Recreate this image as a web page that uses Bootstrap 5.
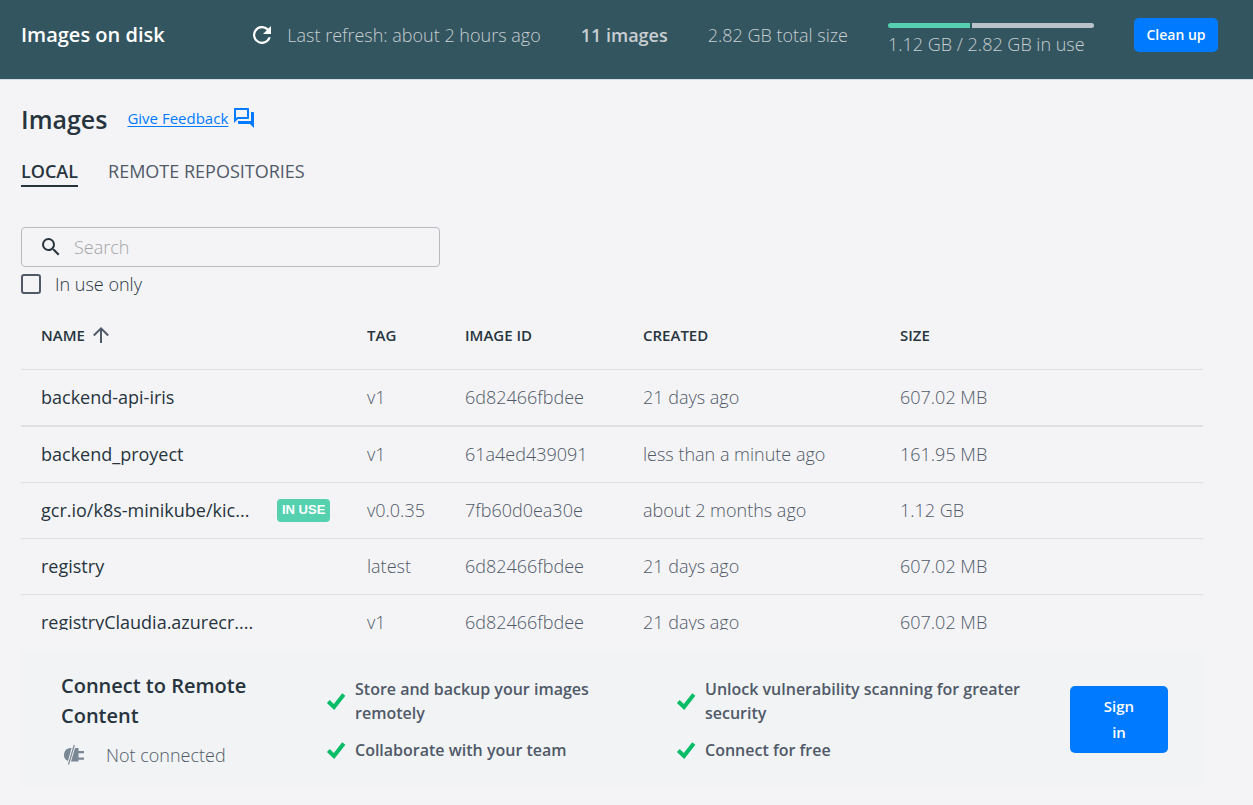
<!DOCTYPE html>
<html lang="en">
<head>
<meta charset="utf-8">
<meta name="viewport" content="width=device-width, initial-scale=1">
<title>Images on disk</title>
<link href="https://cdn.jsdelivr.net/npm/bootstrap@5.3.0/dist/css/bootstrap.min.css" rel="stylesheet">
<style>
  :root {
    --ink: #27343e;
    --soft-ink: #505968;
    --blue: #007bff;
    --mint: #55d1b0;
    --line: #dfe0e3;
  }
  body {
    font-family: "Open Sans", sans-serif;
    font-size: 18px;
    line-height: 24px;
    font-weight: 300;
    color: var(--soft-ink);
    background: #f4f4f6;
  }
  svg { display: block; flex: none; }
  .topbar {
    min-height: 80px;
    padding: 0 35px 9px 21px;
    background: #33555f;
    border-bottom: 1px solid #d5dce2;
    color: #c8ced2;
    gap: 40px;
  }
  .topbar h1 { font-size: 20px; line-height: 24px; font-weight: 600; color: #fff; }
  .refresh { gap: 13px; }
  .icon-btn { color: #fff; width: 24px; height: 24px; }
  .usage { width: 206px; padding-top: 9px; }
  .usage .progress { height: 5px; gap: 2px; background: transparent; border-radius: 3px; }
  .usage .used { background: var(--mint); }
  .usage .free { background: #bac3c9; }
  .btn-blue {
    --bs-btn-color: #fff;
    --bs-btn-bg: var(--blue);
    --bs-btn-hover-color: #fff;
    --bs-btn-hover-bg: #006ae0;
    --bs-btn-border-width: 0;
    --bs-btn-border-radius: 5px;
    --bs-btn-font-weight: 600;
    --bs-btn-font-size: 14px;
  }
  .btn-clean { width: 84px; height: 34px; padding: 0 0 2px; }
  .btn-sign { --bs-btn-font-size: 15px; --bs-btn-line-height: 26px; width: 98px; padding: 7px 24px 8px; }
  .page { padding: 23px 47px 0 21px; }
  .page h2 { font-size: 25px; line-height: 32px; font-weight: 600; color: var(--ink); }
  .feedback { gap: 4px; margin-left: 20px; padding-bottom: 2px; }
  .feedback a { font-size: 15px; font-weight: 400; color: var(--blue); text-underline-offset: 2px; }
  .view-tabs { gap: 30px; margin-top: 24px; }
  .view-tabs .nav-link {
    padding: 0 0 2px;
    font-size: 18px;
    font-weight: 400;
    color: var(--soft-ink);
    border-bottom: 2px solid transparent;
  }
  .view-tabs .nav-link.active { font-weight: 600; color: var(--ink); border-color: var(--ink); }
  .search {
    width: 419px;
    max-width: 100%;
    height: 40px;
    margin-top: 40px;
    padding-left: 17px;
    gap: 11px;
    border: 1px solid #b8babf;
    border-radius: 4px;
    color: var(--ink);
  }
  .search .form-control { font-size: 18px; font-weight: 300; background: transparent; }
  .search .form-control::placeholder { color: #a2a4a9; }
  .in-use-only { gap: 14px; margin-top: 5px; color: var(--ink); }
  .in-use-only .form-check-input {
    width: 20px;
    height: 20px;
    border: 2px solid var(--soft-ink);
    border-radius: 3px;
    background-color: transparent;
  }
  .list-pane { height: 334px; margin-right: 3px; overflow: hidden; }
  .images-table { table-layout: fixed; margin: 0; --bs-table-bg: transparent; --bs-table-color: var(--soft-ink); }
  .images-table > :not(caption) > * > * { padding: 15px 0 16px 20px; border-bottom: 1px solid var(--line); }
  .images-table > thead > tr > th {
    padding: 27px 0 22px 20px;
    font-size: 15px;
    font-weight: 600;
    color: var(--ink);
  }
  .images-table > tbody > tr:first-child > td { border-bottom-width: 2px; }
  .col-tag { width: 98px; }
  .col-id { width: 178px; }
  .col-created { width: 257px; }
  .col-size { width: 323px; }
  .img-name { width: 216px; font-weight: 400; color: var(--ink); }
  .in-use {
    margin-left: 20px;
    padding: 0 5px 2px;
    border-radius: 4px;
    background: var(--mint);
    color: #fff;
    font: 700 13px/21px "Liberation Sans", Arial, sans-serif;
    white-space: nowrap;
  }
  .remote { margin-top: 20px; padding: 21px 38px 19px 40px; background: #f1f3f5; }
  .remote-state { width: 265px; }
  .remote h3 { font-size: 20px; line-height: 30px; font-weight: 600; color: var(--ink); }
  .remote-state .status { gap: 19px; margin-top: 12px; }
  .perks { display: grid; grid-template-columns: 350fr 394fr; row-gap: 13px; font-size: 16px; font-weight: 600; }
  .perks .perk { gap: 9px; padding-right: 40px; }
</style>
</head>
<body>
<header class="topbar d-flex align-items-center">
  <h1 class="m-0 me-auto">Images on disk</h1>
  <div class="refresh d-flex align-items-center">
    <button type="button" class="icon-btn btn p-0 border-0" aria-label="Refresh">
      <svg width="24" height="24" viewBox="0 0 24 24" fill="currentColor"><path d="M18.4 5.600A9 9 0 1 0 20.700 14.300H18.400A6.800 6.800 0 1 1 16.800 7.200L13 11H21V3z"/></svg>
    </button>
    <span>Last refresh: about 2 hours ago</span>
  </div>
  <span class="fw-semibold">11 images</span>
  <span>2.82 GB total size</span>
  <div class="usage">
    <div class="progress">
      <div class="progress-bar used" style="width:40%"></div>
      <div class="progress-bar free flex-fill"></div>
    </div>
    <div class="text-nowrap mt-1">1.12 GB / 2.82 GB in use</div>
  </div>
  <button type="button" class="btn btn-blue btn-clean">Clean up</button>
</header>

<main class="page">
  <div class="d-flex align-items-center">
    <h2 class="m-0">Images</h2>
    <div class="feedback d-flex align-items-center">
      <a href="#">Give Feedback</a>
      <svg width="24" height="24" viewBox="0 0 24 24" fill="#007bff"><path d="M15 4v7H5.170L4 12.170V4h11m1-2H3c-.55 0-1 .45-1 1v14l4-4h10c.55 0 1-.45 1-1V3c0-.55-.45-1-1-1zm5 4h-2v9H6v2c0 .55.45 1 1 1h11l4 4V7c0-.55-.45-1-1-1z"/></svg>
    </div>
  </div>

  <nav class="nav view-tabs">
    <a class="nav-link active" href="#" aria-current="page">LOCAL</a>
    <a class="nav-link" href="#">REMOTE REPOSITORIES</a>
  </nav>

  <div class="search d-flex align-items-center">
    <svg width="24" height="24" viewBox="0 0 24 24" fill="currentColor"><path d="M15.500 14h-.79l-.28-.27A6.470 6.470 0 0 0 16 9.500 6.500 6.500 0 1 0 9.500 16c1.610 0 3.090-.59 4.230-1.570l.27.28v.79l5 4.990L20.490 19l-4.990-5zm-6 0C7.010 14 5 11.990 5 9.500S7.010 5 9.500 5 14 7.010 14 9.500 11.990 14 9.500 14z"/></svg>
    <input type="search" class="form-control border-0 p-0 shadow-none" placeholder="Search" aria-label="Search">
  </div>
  <div class="in-use-only d-flex align-items-center">
    <input class="form-check-input m-0" type="checkbox" id="inUseOnly">
    <label for="inUseOnly">In use only</label>
  </div>

  <div class="list-pane">
    <table class="table images-table">
      <colgroup><col><col class="col-tag"><col class="col-id"><col class="col-created"><col class="col-size"></colgroup>
      <thead>
        <tr>
          <th scope="col"><span class="d-flex align-items-center gap-1">NAME
            <svg width="24" height="24" viewBox="0 0 24 24" fill="none" stroke="#505968" stroke-width="2"><path d="M12 20V5.500M4.800 12.500 12 5.300l7.200 7.200"/></svg></span></th>
          <th scope="col">TAG</th>
          <th scope="col">IMAGE ID</th>
          <th scope="col">CREATED</th>
          <th scope="col">SIZE</th>
        </tr>
      </thead>
      <tbody>
        <tr><td><div class="img-name text-truncate">backend-api-iris</div></td><td>v1</td><td>6d82466fbdee</td><td>21 days ago</td><td>607.02 MB</td></tr>
        <tr><td><div class="img-name text-truncate">backend_proyect</div></td><td>v1</td><td>61a4ed439091</td><td>less than a minute ago</td><td>161.95 MB</td></tr>
        <tr><td><div class="d-flex align-items-end"><div class="img-name text-truncate">gcr.io/k8s-minikube/kic...</div><span class="in-use">IN USE</span></div></td><td>v0.0.35</td><td>7fb60d0ea30e</td><td>about 2 months ago</td><td>1.12 GB</td></tr>
        <tr><td><div class="img-name text-truncate">registry</div></td><td>latest</td><td>6d82466fbdee</td><td>21 days ago</td><td>607.02 MB</td></tr>
        <tr><td><div class="img-name text-truncate">registryClaudia.azurecr....</div></td><td>v1</td><td>6d82466fbdee</td><td>21 days ago</td><td>607.02 MB</td></tr>
      </tbody>
    </table>
  </div>

  <section class="remote d-flex align-items-center">
    <div class="remote-state flex-shrink-0">
      <h3 class="m-0">Connect to Remote<br>Content</h3>
      <div class="status d-flex align-items-center">
        <svg width="26" height="24" viewBox="0 0 26 24"><path d="M10.500 5H9.500a6.800 6.800 0 0 0-2.500 13zM14 5 10 18.500H17.500V16.700H23V14.500H17.500V10.200H23V8H17.500V5z" fill="#7a8794"/><path d="M13.300 2 7.500 21.500" stroke="#7a8794" stroke-width="1.200"/></svg>
        <span>Not connected</span>
      </div>
    </div>
    <div class="perks flex-fill">
      <div class="perk d-flex align-items-center"><svg width="20" height="20" viewBox="0 0 20 20"><path d="M2.300 10.500 8 16 17.800 3.500" fill="none" stroke="#07bc66" stroke-width="4" /></svg><span>Store and backup your images remotely</span></div>
      <div class="perk d-flex align-items-center"><svg width="20" height="20" viewBox="0 0 20 20"><path d="M2.300 10.500 8 16 17.800 3.500" fill="none" stroke="#07bc66" stroke-width="4"/></svg><span>Unlock vulnerability scanning for greater security</span></div>
      <div class="perk d-flex align-items-center"><svg width="20" height="20" viewBox="0 0 20 20"><path d="M2.300 10.500 8 16 17.800 3.500" fill="none" stroke="#07bc66" stroke-width="4"/></svg><span>Collaborate with your team</span></div>
      <div class="perk d-flex align-items-center"><svg width="20" height="20" viewBox="0 0 20 20"><path d="M2.300 10.500 8 16 17.800 3.500" fill="none" stroke="#07bc66" stroke-width="4"/></svg><span>Connect for free</span></div>
    </div>
    <button type="button" class="btn btn-blue btn-sign flex-shrink-0">Sign<br>in</button>
  </section>
</main>
<script src="https://cdn.jsdelivr.net/npm/bootstrap@5.3.0/dist/js/bootstrap.bundle.min.js"></script>
</body>
</html>
